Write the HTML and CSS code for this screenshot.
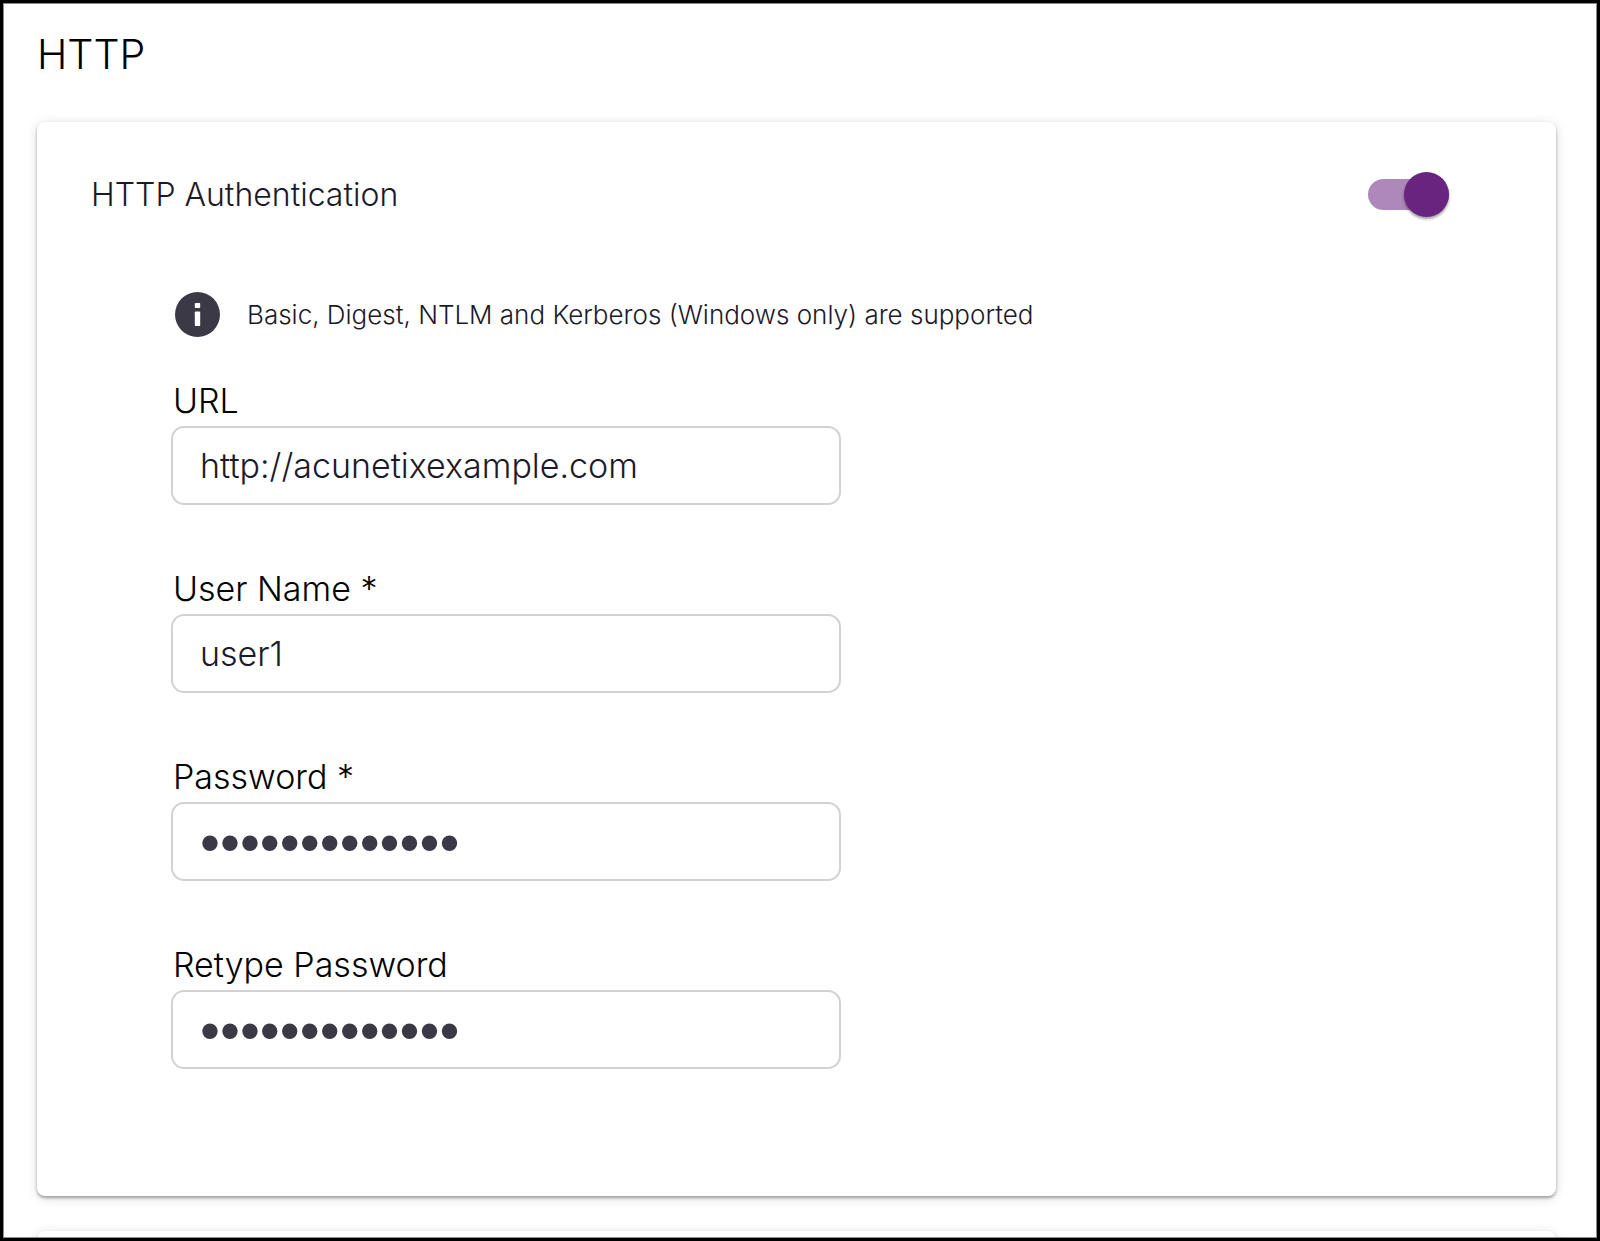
FILE: index.html
```html
<!DOCTYPE html>
<html lang="en">
<head>
    <meta charset="UTF-8">
    <meta name="viewport" content="width=device-width, initial-scale=1.0">
    <title>HTTP</title>
    <link rel="stylesheet" href="styles.css">
</head>
<body>
    <main class="page">
        <h1 class="page-title">HTTP</h1>

        <section class="card">
            <div class="card-header">
                <label class="card-title" for="http-auth">HTTP Authentication</label>
                <input type="checkbox" role="switch" class="toggle" id="http-auth" checked>
            </div>

            <form class="auth-form">
                <div class="info">
                    <svg class="info-icon" viewBox="0 0 45 45" aria-hidden="true">
                        <circle cx="22.5" cy="22.5" r="22.5" fill="#3c3947"/>
                        <rect x="19.8" y="11" width="5.4" height="5" rx="0.8" fill="#fff"/>
                        <rect x="19.8" y="19.5" width="5.4" height="14.5" rx="0.8" fill="#fff"/>
                    </svg>
                    <span class="info-text">Basic, Digest, NTLM and Kerberos (Windows only) are supported</span>
                </div>

                <div class="field">
                    <label for="url">URL</label>
                    <input type="text" id="url" value="http://acunetixexample.com">
                </div>
                <div class="field">
                    <label for="username">User Name *</label>
                    <input type="text" id="username" value="user1">
                </div>
                <div class="field">
                    <label for="password">Password *</label>
                    <input type="password" id="password" value="examplepass12">
                </div>
                <div class="field">
                    <label for="retype-password">Retype Password</label>
                    <input type="password" id="retype-password" value="examplepass12">
                </div>
            </form>
        </section>

        <section class="card next-card"></section>
    </main>
</body>
</html>
```
FILE: styles.css
```css
* {
    box-sizing: border-box;
}
body {
    margin: 0;
    padding: 3px;
    height: 100vh;
    background: #000;
    color: #000;
    font-family: Inter, "Liberation Sans", sans-serif;
    font-weight: 300;
}
.page {
    height: 100%;
    padding: 25px 40px 0 33px;
    overflow: hidden;
    background: #fff;
    border: 1px solid #8c8c8c;
}
.page-title {
    margin: 0 0 43px;
    font-size: 41px;
    line-height: 50px;
    font-weight: 300;
}
.card {
    padding: 50px 107px 127px 54px;
    background: #fff;
    border-radius: 8px;
    box-shadow: 0 2px 3px rgba(0, 0, 0, 0.32), 0 2px 12px rgba(0, 0, 0, 0.14);
}
.card-header {
    display: flex;
    align-items: center;
    justify-content: space-between;
    height: 45px;
}
.card-title {
    font-size: 32px;
    line-height: 45px;
    color: #1b1a2a;
}
.toggle {
    appearance: none;
    position: relative;
    width: 81px;
    height: 31px;
    margin: 0;
    border-radius: 16px;
    background: #ae88ba;
    cursor: pointer;
}
.toggle::before {
    content: "";
    position: absolute;
    top: -7px;
    right: 0;
    width: 45px;
    height: 45px;
    border-radius: 50%;
    background: #69247f;
    box-shadow: 0 2px 3px rgba(0, 0, 0, 0.4);
}
.auth-form {
    padding: 75px 0 0 80px;
}
.info {
    display: flex;
    align-items: center;
    gap: 27px;
    margin: 0 0 39px 4px;
}
.info-icon {
    flex: none;
    width: 45px;
    height: 45px;
}
.info-text {
    font-size: 26px;
    line-height: 32px;
    color: #1b1a2a;
}
.field {
    width: 670px;
    max-width: 100%;
}
.field + .field {
    margin-top: 59px;
}
.field label {
    display: block;
    padding-left: 2px;
    font-size: 34px;
    line-height: 50px;
}
.field input {
    display: block;
    width: 100%;
    height: 79px;
    padding: 0 27px;
    border: 2px solid #d2d2d2;
    border-radius: 13px;
    outline: none;
    background: #fff;
    color: #1b1a2a;
    font-family: inherit;
    font-size: 34px;
    font-weight: 300;
}
.field input[type="password"] {
    color: #3c3947;
    font-family: "Liberation Sans", Arial, sans-serif;
    font-size: 57px;
}
.next-card {
    margin-top: 35px;
}
```
